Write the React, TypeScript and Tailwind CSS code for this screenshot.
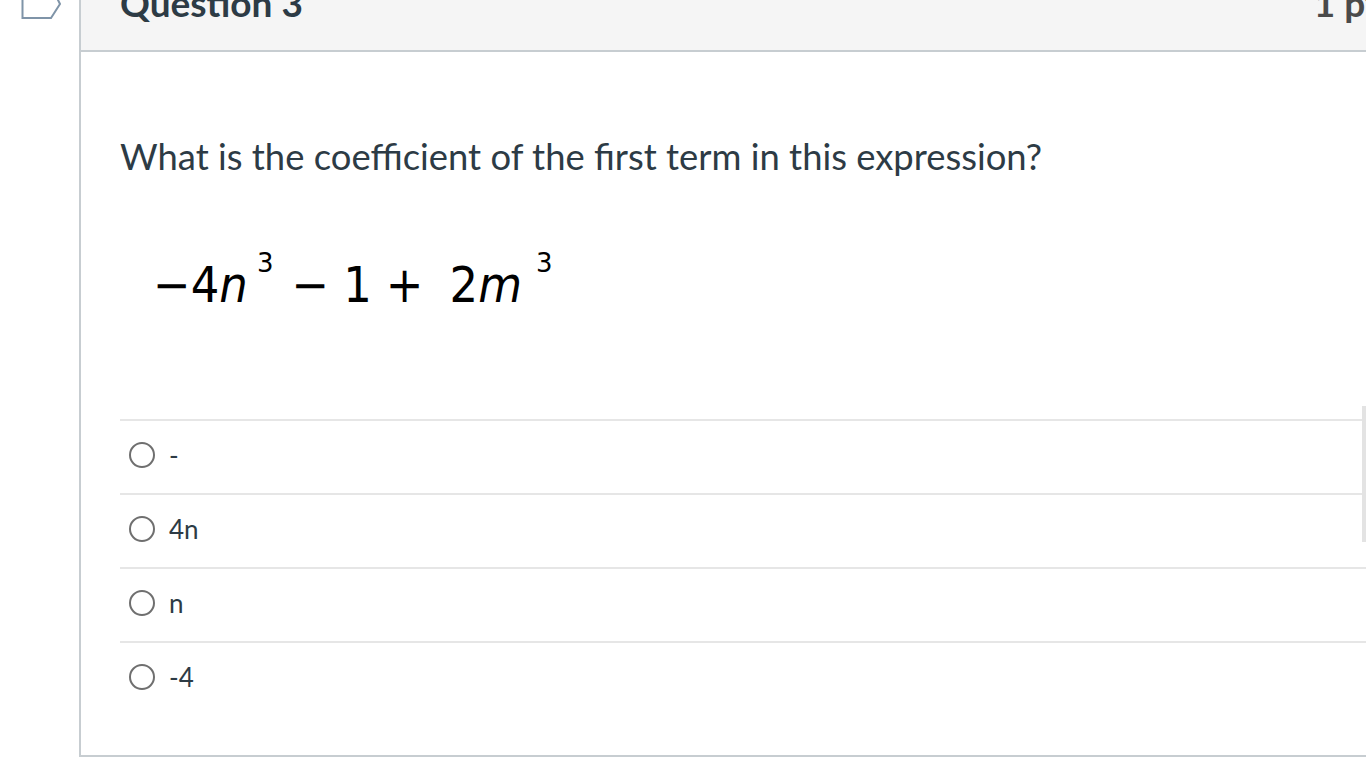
import { ReactNode } from 'react';

const TEXT_CLASS = "font-['Lato','Liberation_Sans',sans-serif] text-[#2d3b45]";

function BookmarkIcon() {
  return (
    <svg width="42" height="32" viewBox="0 0 42 32" className="block">
      <path d="M1.5 0 V30 H30 L39 16 L32 2" fill="none" stroke="#7f94a8" strokeWidth="2" strokeLinejoin="miter" />
    </svg>
  );
}

function AnswerRow({ label }: { label: ReactNode }) {
  return (
    <div className="flex h-[74px] items-center border-t-2 border-[#e6e6e6] pb-[4px]">
      <span className="ml-[9px] h-[26px] w-[26px] rounded-full border-2 border-[#6f6f6f] bg-white" />
      <span className={`${TEXT_CLASS} ml-[14px] text-[26px] leading-none`}>{label}</span>
    </div>
  );
}

function MathExpression() {
  return (
    <div className="ml-[33px] flex h-[70px] origin-bottom scale-y-[1.1] items-end font-['DejaVu_Sans',sans-serif] text-[45px] leading-none text-black">
      <span>−4</span>
      <span className="italic">n</span>
      <span className="mb-[30px] ml-[9px] text-[26px] scale-y-[0.9]">3</span>
      <span className="ml-[18px]">−</span>
      <span className="ml-[14px]">1</span>
      <span className="ml-[14px]">+</span>
      <span className="ml-[26px]">2</span>
      <span className="italic">m</span>
      <span className="mb-[30px] ml-[14px] text-[26px] scale-y-[0.9]">3</span>
    </div>
  );
}

export default function App() {
  const answers = ['-', '4n', 'n', '-4'];

  return (
    <div className="relative h-[768px] w-[1366px] overflow-hidden bg-white">
      <div className="flex">
        <div className="w-[79px] shrink-0">
          <div className="-mt-[12px] ml-[21px]">
            <BookmarkIcon />
          </div>
        </div>
        <div className="flex-1 border-b-2 border-l-2 border-[#c7cdd1]">
          <div className="-mt-[40px] flex h-[92px] items-center justify-between border-b-2 border-[#c7cdd1] bg-[#f5f5f5] pb-[6px] pl-[39px]">
            <span className={`${TEXT_CLASS} text-[37px] font-bold leading-none`}>Question 3</span>
            <span className={`${TEXT_CLASS} -mr-[29px] text-[37px] font-bold leading-none text-[#4a4a4a]`}>1 pts</span>
          </div>
          <div className="pl-[39px]">
            <p className={`${TEXT_CLASS} mt-[80px] text-[36.4px] leading-[48px]`}>
              What is the coefficient of the first term in this expression?
            </p>
            <div className="mt-[60px]">
              <MathExpression />
            </div>
            <div className="mt-[109px] pb-[40px]">
              {answers.map((answer) => (
                <AnswerRow key={answer} label={answer} />
              ))}
            </div>
          </div>
        </div>
      </div>
      <div className="absolute left-[1362px] top-[406px] h-[136px] w-[4px] bg-[#e3e3e3]" />
    </div>
  );
}
